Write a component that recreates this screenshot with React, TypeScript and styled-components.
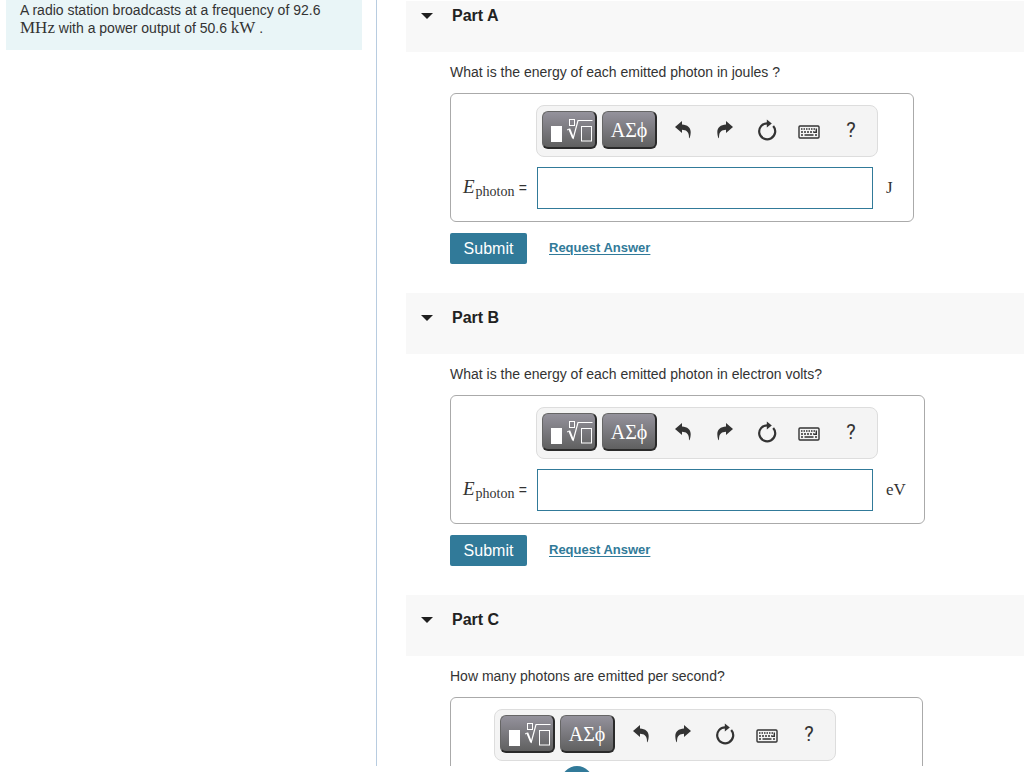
import React from "react";
import styled, { createGlobalStyle } from "styled-components";

const sans = '"Liberation Sans", Helvetica, Arial, sans-serif';
const serif = '"Liberation Serif", "Times New Roman", serif';
const teal = "#317a99";

const GlobalStyle = createGlobalStyle`
  * { box-sizing: border-box; }
  body {
    margin: 0;
    background: #fff;
    color: #333;
    font-family: ${sans};
    font-size: 14px;
    line-height: 18px;
  }
`;

const Page = styled.div`
  display: flex;
  flex-direction: column;
  height: 100vh;
  overflow: hidden;
`;

const Columns = styled.div`
  display: flex;
  flex: 1;
  min-height: 0;
`;

const Sidebar = styled.aside`
  flex: 0 0 377px;
  padding: 0 14px 0 6px;
  border-right: 1px solid #b8cce0;
`;

const Prompt = styled.p`
  margin: 0;
  padding: 1px 14px 13px;
  background: #e9f5f7;
`;

const MathText = styled.span`
  font-family: ${serif};
  font-size: 17px;
  line-height: 18px;
`;

const Parts = styled.main`
  flex: 1;
  min-width: 0;
  padding: 1px 0 0 29px;
  overflow: hidden;
`;

const PartSection = styled.section`
  padding-bottom: 29px;
`;

const PartHeader = styled.header<{ $first?: boolean }>`
  display: flex;
  align-items: center;
  gap: 19px;
  padding: ${(p) => (p.$first ? 5 : 15)}px 15px 26px;
  background: #f8f8f8;
`;

const Caret = styled.span`
  width: 0;
  border: 6px solid transparent;
  border-top-color: #1f1f1f;
  border-bottom: 0;
`;

const PartTitle = styled.h2`
  margin: 0;
  font-size: 16px;
  line-height: 20px;
  color: #222;
`;

const PartBody = styled.div`
  padding-left: 44px;
`;

const Question = styled.p`
  margin: 0;
  padding: 11px 0 12px;
`;

const AnswerBox = styled.div<{ $width: number }>`
  width: ${(p) => p.$width}px;
  max-width: 100%;
  padding: 11px 0 12px 12px;
  border: 1px solid #aaa;
  border-radius: 6px;
`;

const AnswerGrid = styled.div<{ $label: number }>`
  display: grid;
  grid-template-columns: ${(p) => p.$label}px 342px 1fr;
  row-gap: 10px;
  align-items: center;
`;

const Toolbar = styled.div`
  grid-column: 2;
  display: flex;
  align-items: center;
  gap: 5px;
  height: 52px;
  padding: 0 5px 2px;
  border: 1px solid #ddd;
  border-radius: 8px;
  background: #f4f4f4;
`;

const PaletteButton = styled.button`
  display: flex;
  align-items: center;
  justify-content: center;
  width: 55px;
  height: 38px;
  padding: 0;
  border: 1px solid #666;
  border-right: 2px solid #2a2a2a;
  border-bottom: 2px solid #2a2a2a;
  border-radius: 6px;
  background: linear-gradient(#94929c, #606060);
  color: #fff;
  font-family: ${serif};
  font-size: 20px;
  line-height: 24px;
`;

const ToolGroup = styled.div`
  display: flex;
`;

const ToolButton = styled.button`
  display: flex;
  align-items: center;
  justify-content: center;
  width: 42px;
  height: 38px;
  padding: 0;
  border: 0;
  background: none;
  color: #333;
  font-family: Roboto, ${sans};
  font-size: 20px;
  line-height: 24px;
`;

const FieldLabel = styled.label`
  grid-column: 1;
  display: flex;
  align-items: baseline;
  padding-right: 9px;
  white-space: nowrap;
`;

const Variable = styled.i`
  font-family: ${serif};
  font-size: 19px;
`;

const Subscript = styled.span`
  position: relative;
  top: 3px;
  padding-left: 1px;
  font-family: ${serif};
  font-size: 14px;
`;

const Equals = styled.span`
  margin-left: auto;
`;

const Field = styled.input`
  width: 336px;
  height: 42px;
  margin-left: 1px;
  padding: 0 8px;
  border: 1px solid ${teal};
  border-radius: 0;
  background: #fff;
  font-family: ${sans};
  font-size: 16px;
`;

const Unit = styled(MathText)`
  padding-left: 8px;
`;

const Actions = styled.div`
  display: flex;
  align-items: center;
  gap: 22px;
  margin-top: 11px;
`;

const SubmitButton = styled.button`
  width: 77px;
  height: 31px;
  padding: 0;
  border: 0;
  border-radius: 2px;
  background: ${teal};
  color: #fff;
  font-family: ${sans};
  font-size: 16px;
  line-height: 20px;
`;

const RequestLink = styled.a`
  padding-bottom: 2px;
  color: ${teal};
  font-size: 13px;
  font-weight: bold;
  text-underline-offset: 2px;
`;

const BottomStrip = styled.div`
  flex: 0 0 6px;
  padding-left: 561px;
  overflow: hidden;
`;

const RoundBadge = styled.div`
  width: 32px;
  height: 32px;
  border-radius: 50%;
  background: ${teal};
`;

const TemplateIcon = () => (
  <svg width="52" height="35" viewBox="0 0 52 35" fill="none" stroke="#fff">
    <rect x="8" y="14" width="11" height="16" fill="#fff" stroke="none" />
    <rect x="26.5" y="7.5" width="5" height="6" />
    <path d="M24 18l2.500-1.200" />
    <path d="M26.300 16.800L30 26" strokeWidth="2" />
    <path d="M30 27L35 8.500H49.500" strokeWidth="1.200" />
    <rect x="38.500" y="14.500" width="10" height="14.500" />
  </svg>
);

const UndoIcon = () => (
  <svg width="16" height="18" viewBox="0 0 16 18" fill="currentColor">
    <path d="M0 6L7 0v3.400C12.400 3.600 15.700 6.500 15.700 11c0 2.800-.8 5.800-1.400 6.300-.5.300-.2-1.800-.5-3.300C13.200 10.500 11.300 8.900 7 8.700V12z" />
  </svg>
);

const RedoIcon = () => (
  <svg width="16" height="18" viewBox="0 0 16 18" fill="currentColor">
    <path d="M16 6L9 0v3.400C3.600 3.600.3 6.500.3 11c0 2.800.8 5.800 1.400 6.300.5.300.2-1.800.5-3.300C2.800 10.500 4.700 8.900 9 8.700V12z" />
  </svg>
);

const ResetIcon = () => (
  <svg width="20" height="22" viewBox="0 0 20 22">
    <path
      d="M10.500 4.300A8 8 0 1 0 16.200 7"
      fill="none"
      stroke="currentColor"
      strokeWidth="2.200"
    />
    <path d="M9.800 0.500l5 4-5 4z" fill="currentColor" />
  </svg>
);

const KeyboardIcon = () => (
  <svg width="22" height="18" viewBox="0 -4 22 18" fill="none" stroke="currentColor">
    <rect x="1" y="1" width="20" height="12" rx="1" strokeWidth="1.400" />
    <path d="M3 4H17" strokeWidth="1.500" strokeDasharray="1.500 1" />
    <path d="M3 7H16" strokeWidth="1.500" strokeDasharray="2 1" />
    <path d="M18.300 3.500V7.200H16" strokeWidth="1.400" />
    <path d="M3 10H5M6.500 10H15.500M17 10H19" strokeWidth="1.500" />
  </svg>
);

const MathToolbar = () => (
  <Toolbar role="toolbar">
    <PaletteButton type="button" aria-label="Templates">
      <TemplateIcon />
    </PaletteButton>
    <PaletteButton type="button">ΑΣϕ</PaletteButton>
    <ToolGroup>
      <ToolButton type="button" aria-label="Undo"><UndoIcon /></ToolButton>
      <ToolButton type="button" aria-label="Redo"><RedoIcon /></ToolButton>
      <ToolButton type="button" aria-label="Reset"><ResetIcon /></ToolButton>
      <ToolButton type="button" aria-label="Keyboard"><KeyboardIcon /></ToolButton>
      <ToolButton type="button">?</ToolButton>
    </ToolGroup>
  </Toolbar>
);

interface PartProps {
  id: string;
  title: string;
  question: string;
  boxWidth: number;
  unit?: string;
  first?: boolean;
}

const Part = ({ id, title, question, boxWidth, unit, first }: PartProps) => (
  <PartSection>
    <PartHeader $first={first}>
      <Caret />
      <PartTitle>{title}</PartTitle>
    </PartHeader>
    <PartBody>
      <Question>{question}</Question>
      <AnswerBox $width={boxWidth}>
        <AnswerGrid $label={unit ? 73 : 31}>
          <MathToolbar />
          {unit && (
            <>
              <FieldLabel htmlFor={id}>
                <Variable>E</Variable>
                <Subscript>photon</Subscript>
                <Equals>=</Equals>
              </FieldLabel>
              <Field id={id} type="text" />
              <Unit>{unit}</Unit>
            </>
          )}
        </AnswerGrid>
      </AnswerBox>
      {unit && (
        <Actions>
          <SubmitButton type="button">Submit</SubmitButton>
          <RequestLink href="#">Request Answer</RequestLink>
        </Actions>
      )}
    </PartBody>
  </PartSection>
);

export default function App() {
  return (
    <Page>
      <GlobalStyle />
      <Columns>
        <Sidebar>
          <Prompt>
            A radio station broadcasts at a frequency of 92.6{" "}
            <MathText>MHz</MathText> with a power output of 50.6{" "}
            <MathText>kW</MathText> .
          </Prompt>
        </Sidebar>
        <Parts>
          <Part
            id="part-a"
            title="Part A"
            question="What is the energy of each emitted photon in joules ?"
            boxWidth={464}
            unit="J"
            first
          />
          <Part
            id="part-b"
            title="Part B"
            question="What is the energy of each emitted photon in electron volts?"
            boxWidth={475}
            unit="eV"
          />
          <Part
            id="part-c"
            title="Part C"
            question="How many photons are emitted per second?"
            boxWidth={473}
          />
        </Parts>
      </Columns>
      <BottomStrip>
        <RoundBadge />
      </BottomStrip>
    </Page>
  );
}
